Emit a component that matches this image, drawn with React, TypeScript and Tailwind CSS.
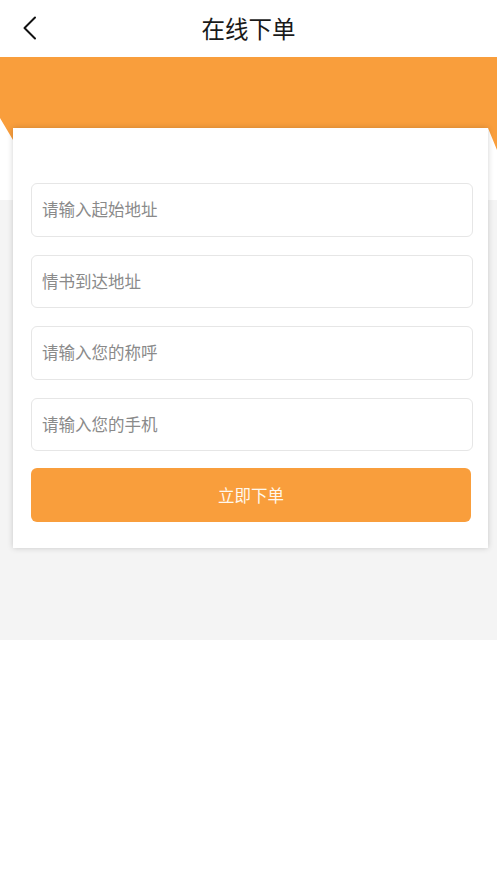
import React from "react";

const font = { fontFamily: '"Noto Sans CJK SC", "Noto Sans", sans-serif' };

export default function App() {
  const fields = ["请输入起始地址", "情书到达地址", "请输入您的称呼", "请输入您的手机"];
  return (
    <div className="w-[497px] min-h-[883px] bg-white" style={font}>
      <header className="relative h-[57px] flex items-center justify-center">
        <div className="absolute left-[22px] top-[16px]">
          <svg width="16" height="24" viewBox="0 0 16 24" fill="none">
            <path d="M13 1.5 L2.5 12 L13 22.5" stroke="#111" strokeWidth="2" strokeLinecap="round" strokeLinejoin="round" />
          </svg>
        </div>
        <h1 className="text-[23.5px] text-[#1a1a1a] leading-none">在线下单</h1>
      </header>
      <div className="grid">
        <div className="[grid-area:1/1] flex flex-col">
          <div className="h-[93px] bg-[#f99e3c] [clip-path:polygon(0_0,100%_0,100%_93px,calc(100%-9px)_71px,13px_83px,0_61px)]" />
          <div className="h-[50px] bg-white" />
          <div className="h-[440px] bg-[#f4f4f4]" />
        </div>
        <div className="[grid-area:1/1] relative z-10 pt-[71px] pl-[13px] pr-[9px]">
          <div className="bg-white shadow-[0_0_6px_rgba(0,0,0,0.18)] pt-[55px] pb-[26px] pl-[18px] pr-[15px]">
            <div className="flex flex-col gap-[18px]">
              {fields.map((f) => (
                <div
                  key={f}
                  className="h-[53.5px] border border-[#e6e6e6] rounded-[6px] flex items-center pl-[10px] text-[16.5px] text-[#8a8a8a]"
                >
                  {f}
                </div>
              ))}
            </div>
            <div className="mt-[17px] mr-[2px] h-[54px] rounded-[6px] bg-[#f99e3c] flex items-center justify-center text-[16.5px] text-[#fff8ee]">
              立即下单
            </div>
          </div>
        </div>
      </div>
    </div>
  );
}
